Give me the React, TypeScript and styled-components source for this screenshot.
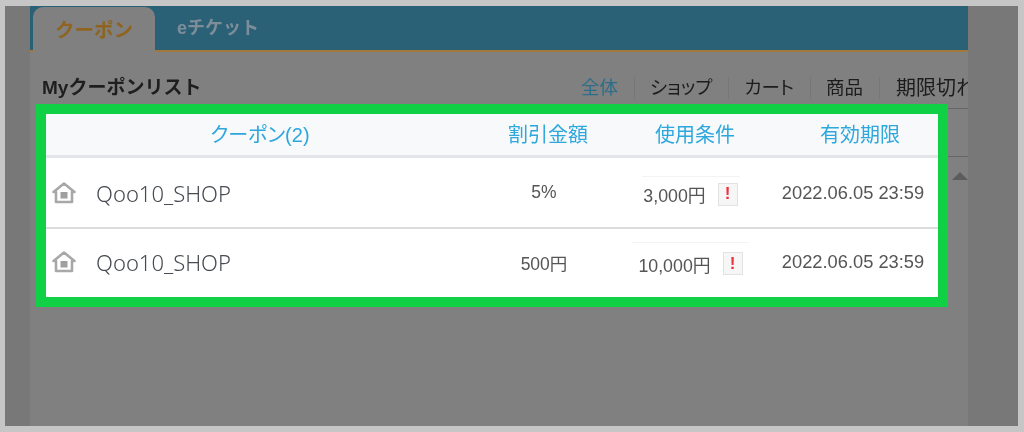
import styled, { createGlobalStyle } from "styled-components"

type Coupon = {
    shop: string,
    discount: string,
    condition: string,
    expires: string,
    wide?: boolean
}

const coupons: Coupon[] = [
    { shop: "Qoo10_SHOP", discount: "5%", condition: "3,000円", expires: "2022.06.05 23:59" },
    { shop: "Qoo10_SHOP", discount: "500円", condition: "10,000円", expires: "2022.06.05 23:59", wide: true },
]

const filters = ["全体", "ショップ", "カート", "商品", "期限切れ"]

const JP = `"Liberation Sans", "Noto Sans CJK JP", sans-serif`

const Global = createGlobalStyle`
    html, body {
        margin: 0;
        padding: 0;
        background: #c6c6c6;
    }
    * {
        box-sizing: border-box;
    }
`

const Frame = styled.div`
    width: 1024px;
    height: 432px;
    padding: 6px 6px 6px 5px;
    overflow: hidden;
`

const Stage = styled.div`
    position: relative;
    height: 420px;
    padding-left: 25px;
    background: #787878;
    filter: blur(0.45px);
`

const Panel = styled.div`
    width: 938px;
    height: 420px;
    background: #808080;
    overflow: hidden;
    font-family: ${JP};
`

const TabBar = styled.div`
    display: flex;
    align-items: flex-end;
    height: 46px;
    padding-left: 3px;
    background: #2b6177;
    border-bottom: 2px solid #a0783a;
`

const Tab = styled.div<{ $active?: boolean }>`
    width: 122px;
    height: ${p => (p.$active ? "45px" : "44px")};
    margin-bottom: ${p => (p.$active ? "-2px" : "0")};
    padding-top: ${p => (p.$active ? "11px" : "10px")};
    padding-left: 22px;
    border-radius: 10px 10px 0 0;
    background: ${p => (p.$active ? "#808080" : "transparent")};
    color: ${p => (p.$active ? "#8f6420" : "#7d8e98")};
    font-size: ${p => (p.$active ? "19.5px" : "18px")};
    font-weight: 700;
    line-height: 24px;
`

const ListHead = styled.div`
    display: flex;
    justify-content: space-between;
    align-items: center;
    height: 52px;
    padding: 20px 0 0 12px;
`

const ListTitle = styled.h2`
    margin: 0;
    color: #1e1e1e;
    font-size: 19px;
    font-weight: 700;
    line-height: 22px;
`

const Filters = styled.ul`
    display: flex;
    width: 402.5px;
    flex-shrink: 0;
    margin: 0;
    padding: 0;
    list-style: none;
    white-space: nowrap;
`

const Filter = styled.li<{ $active?: boolean }>`
    padding: 0 15.5px;
    border-left: 1px solid #767676;
    color: ${p => (p.$active ? "#2d6d8a" : "#1c1c1c")};
    font-size: 18.5px;
    font-feature-settings: "palt";
    line-height: 22px;

    &:first-child {
        border-left: 0;
    }

    &:last-child {
        padding-left: 16.5px;
        font-size: 20px;
    }
`

const Highlight = styled.section`
    width: 912px;
    height: 203px;
    margin: 0 0 0 6px;
    border: 10px solid #10d146;
    background: #fff;
`

const Row = styled.div<{ $head?: boolean }>`
    display: grid;
    grid-template-columns: 428px 148px 146px 170px;
    align-items: center;
    height: ${p => (p.$head ? "44px" : "69px")};
    background: ${p => (p.$head ? "#f7f9fb" : "#fff")};
    border-bottom: ${p => (p.$head ? "3px solid #e4e5e8" : "none")};

    & + & + & {
        height: 70px;
        padding-bottom: 2px;
        border-top: 2px solid #dcdcdc;
    }
`

const HeadCell = styled.div<{ $shift?: number }>`
    padding-left: ${p => p.$shift ?? 0}px;
    color: #2ea7dc;
    font-size: 20px;
    font-feature-settings: "palt";
    line-height: 22px;
    text-align: center;
`

const ShopCell = styled.div`
    display: flex;
    align-items: center;
    gap: 19px;
    padding-left: 5px;
    color: #484c52;
    font-family: "Noto Sans", sans-serif;
    font-size: 22px;
    font-weight: 300;
`

const Cell = styled.div<{ $shift?: number, $size: number }>`
    padding-right: ${p => p.$shift ?? 0}px;
    color: #555;
    font-size: ${p => p.$size}px;
    text-align: center;
`

const ConditionCell = styled.div`
    display: flex;
    justify-content: center;
    padding-right: 9px;
`

const Condition = styled.div<{ $wide?: boolean }>`
    display: flex;
    align-items: center;
    justify-content: center;
    gap: 12px;
    width: ${p => (p.$wide ? "117px" : "98px")};
    height: ${p => (p.$wide ? "42px" : "36px")};
    margin-top: 2px;
    border-top: 1px solid #f3f3f3;
    color: #555;
    font-size: 17.8px;
`

const Notice = styled.span`
    display: flex;
    align-items: center;
    justify-content: center;
    width: 20px;
    height: 23px;
    background: #f6f6f6;
    border: 1px solid #e2e2e2;
    color: #f0303c;
    font-size: 17px;
    font-weight: 700;
`

const SideRule = styled.div<{ $top: number }>`
    position: absolute;
    left: 943px;
    top: ${p => p.$top}px;
    width: 20px;
    height: 1px;
    background: #666;
`

const ScrollUp = styled.div`
    position: absolute;
    left: 947px;
    top: 166px;
    width: 0;
    height: 0;
    border-left: 8px solid transparent;
    border-right: 8px solid transparent;
    border-bottom: 8px solid #5c5c5c;
`

function HomeIcon() {
    return (
        <svg width="26" height="24" viewBox="0 0 26 24">
            <path d="M13 2.5 L23.5 11 H21 V21 H5 V11 H2.5 Z" fill="none" stroke="#a8a8a8" strokeWidth="2.6" strokeLinejoin="round" />
            <rect x="9.5" y="11" width="7" height="6.5" fill="#a0a0a0" />
        </svg>
    )
}

export default function App() {
    return (
        <>
            <Global />
            <Frame>
                <Stage>
                    <Panel>
                        <TabBar>
                            <Tab $active>クーポン</Tab>
                            <Tab>eチケット</Tab>
                        </TabBar>
                        <ListHead>
                            <ListTitle>Myクーポンリスト</ListTitle>
                            <Filters>
                                {filters.map((f, i) => <Filter key={f} $active={i === 0}>{f}</Filter>)}
                            </Filters>
                        </ListHead>
                        <Highlight>
                            <Row $head>
                                <HeadCell>クーポン(2)</HeadCell>
                                <HeadCell>割引金額</HeadCell>
                                <HeadCell>使用条件</HeadCell>
                                <HeadCell $shift={14}>有効期限</HeadCell>
                            </Row>
                            {coupons.map((c, i) => (
                                <Row key={i}>
                                    <ShopCell><HomeIcon />{c.shop}</ShopCell>
                                    <Cell $shift={8} $size={17.5}>{c.discount}</Cell>
                                    <ConditionCell>
                                        <Condition $wide={c.wide}>{c.condition}<Notice>!</Notice></Condition>
                                    </ConditionCell>
                                    <Cell $size={18.3}>{c.expires}</Cell>
                                </Row>
                            ))}
                        </Highlight>
                    </Panel>
                    <SideRule $top={102} />
                    <SideRule $top={150} />
                    <ScrollUp />
                </Stage>
            </Frame>
        </>
    )
}
